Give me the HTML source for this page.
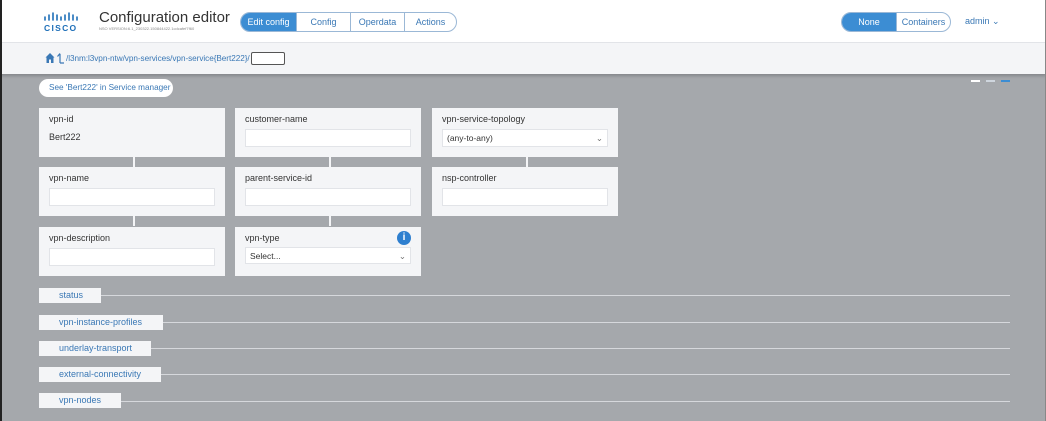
<!DOCTYPE html>
<html><head><style>
*{box-sizing:border-box;margin:0;padding:0}
body{width:1046px;height:421px;overflow:hidden;font-family:"Liberation Sans",sans-serif;background:#a5a8ac;position:relative}
.abs{position:absolute;white-space:nowrap}
.hdr{left:0;top:0;width:1046px;height:43px;background:#fff;border-bottom:1px solid #e4e6ea}
.bc{left:0;top:43px;width:1046px;height:31px;background:#f4f5f7;box-shadow:0 2px 3px rgba(0,0,0,.2)}
.lb{left:0;top:0;width:2px;height:421px;background:#222}
.rb{right:0;top:0;width:1px;height:421px;background:#888}
.seg{display:flex;border:1px solid #9bb8d6;border-radius:12px;overflow:hidden;height:20px;font-size:9px;color:#3a78b5}
.seg div{display:flex;align-items:center;justify-content:center;border-left:1px solid #9bb8d6}
.seg div:first-child{border-left:none}
.seg .on{background:#3c8dd3;color:#fff}
.card{background:#f4f5f7;width:186px;height:49px}
.card .l{position:absolute;left:10px;top:6px;font-size:9px;color:#333}
.card .in{position:absolute;left:10px;top:21px;width:166px;height:18px;background:#fff;border:1px solid #e2e4e8;font-size:8.5px;color:#333;padding:3px 4px}
.conn{width:2px;height:10px;background:#f4f5f7}
.sec{background:#f4f5f7;height:15px;font-size:9px;color:#3a78b5;padding:2px 0 0 20px}
.line{height:1px;background:#d6d8dc}
</style></head><body>
<div class="abs hdr"></div>
<svg class="abs" style="left:43px;top:12px" width="36" height="10" viewBox="0 0 36 10">
<g stroke="#1e6fb8" stroke-width="1.6" stroke-linecap="round">
<line x1="2" y1="5" x2="2" y2="8"/><line x1="6" y1="3" x2="6" y2="8"/><line x1="10" y1="1" x2="10" y2="8"/><line x1="14" y1="3" x2="14" y2="8"/><line x1="18" y1="5" x2="18" y2="8"/><line x1="22" y1="3" x2="22" y2="8"/><line x1="26" y1="1" x2="26" y2="8"/><line x1="30" y1="3" x2="30" y2="8"/><line x1="34" y1="5" x2="34" y2="8"/></g></svg>
<div class="abs" style="left:44px;top:23px;font-weight:bold;font-size:8.5px;color:#1e6fb8;letter-spacing:1.3px">CISCO</div>
<div class="abs" style="left:99px;top:9px;font-size:15px;color:#333">Configuration editor</div>
<div class="abs" style="left:99px;top:26px;font-size:4px;color:#888">NSO VERSION:6.1_230322.150844422.1cdcafef7f60</div>
<div class="abs seg" style="left:240px;top:12px;width:217px">
<div class="on" style="width:55px">Edit config</div><div style="width:54px">Config</div><div style="width:54px">Operdata</div><div style="flex:1">Actions</div></div>
<div class="abs seg" style="left:841px;top:12px;width:110px"><div class="on" style="width:54px">None</div><div style="flex:1">Containers</div></div>
<div class="abs" style="left:965px;top:16px;font-size:9px;color:#3a78b5">admin ⌄</div>
<div class="abs bc"></div>
<svg class="abs" style="left:45px;top:52px" width="22" height="12" viewBox="0 0 22 12">
<path d="M0.5 5.5 L5 1 L9.5 5.5 L8.5 5.5 L8.5 11 L6 11 L6 7.5 L4 7.5 L4 11 L1.5 11 L1.5 5.5 Z" fill="#3a78b5"/>
<path d="M15 11 L15 2 M12.5 4.5 L15 1.5 M15 11 L19 11" stroke="#3a78b5" stroke-width="1.2" fill="none"/></svg>
<div class="abs" style="left:66px;top:54px;font-size:8.2px;color:#3a78b5;letter-spacing:-0.05px">/l3nm:l3vpn-ntw/vpn-services/vpn-service{Bert222}/</div>
<div class="abs" style="left:251px;top:52px;width:34px;height:13px;background:#fff;border:1px solid #555;border-radius:2px"></div>
<div class="abs" style="left:39px;top:79px;width:134px;height:18px;background:#fff;border-radius:9px;font-size:8.2px;color:#3a78b5;padding:4px 0 0 10px">See 'Bert222' in Service manager</div>
<div class="abs" style="left:971px;top:80px;width:9px;height:2px;background:#fff"></div>
<div class="abs" style="left:986px;top:80px;width:9px;height:2px;background:#cfd6de"></div>
<div class="abs" style="left:1001px;top:80px;width:9px;height:2px;background:#3c8dd3"></div>

<div class="abs card" style="left:39px;top:108px"><div class="l">vpn-id</div><div class="l" style="top:24px">Bert222</div></div>
<div class="abs card" style="left:235px;top:108px"><div class="l">customer-name</div><div class="in"></div></div>
<div class="abs card" style="left:432px;top:108px"><div class="l">vpn-service-topology</div><div class="in">(any-to-any)<span style="float:right;color:#777">⌄</span></div></div>
<div class="abs conn" style="left:133px;top:157px"></div><div class="abs conn" style="left:329px;top:157px"></div><div class="abs conn" style="left:526px;top:157px"></div>
<div class="abs card" style="left:39px;top:167px"><div class="l">vpn-name</div><div class="in"></div></div>
<div class="abs card" style="left:235px;top:167px"><div class="l">parent-service-id</div><div class="in"></div></div>
<div class="abs card" style="left:432px;top:167px"><div class="l">nsp-controller</div><div class="in"></div></div>
<div class="abs conn" style="left:133px;top:216px"></div><div class="abs conn" style="left:329px;top:216px"></div>
<div class="abs card" style="left:39px;top:227px"><div class="l">vpn-description</div><div class="in"></div></div>
<div class="abs card" style="left:235px;top:227px"><div class="l">vpn-type</div><div class="in" style="top:20px;height:17px">Select...<span style="float:right;color:#777">⌄</span></div>
<div class="abs" style="left:162px;top:4px;width:14px;height:14px;border-radius:50%;background:#2e7fcf;color:#fff;font-size:10px;font-weight:bold;text-align:center;line-height:14px">i</div></div>

<div class="abs line" style="left:100px;top:295px;width:910px"></div><div class="abs sec" style="left:39px;top:288px;width:62px">status</div>
<div class="abs line" style="left:162px;top:322px;width:848px"></div><div class="abs sec" style="left:39px;top:315px;width:124px">vpn-instance-profiles</div>
<div class="abs line" style="left:150px;top:348px;width:860px"></div><div class="abs sec" style="left:39px;top:341px;width:112px">underlay-transport</div>
<div class="abs line" style="left:160px;top:374px;width:850px"></div><div class="abs sec" style="left:39px;top:367px;width:122px">external-connectivity</div>
<div class="abs line" style="left:120px;top:401px;width:890px"></div><div class="abs sec" style="left:39px;top:393px;width:82px">vpn-nodes</div>
<div class="abs lb"></div><div class="abs rb"></div>
</body></html>
